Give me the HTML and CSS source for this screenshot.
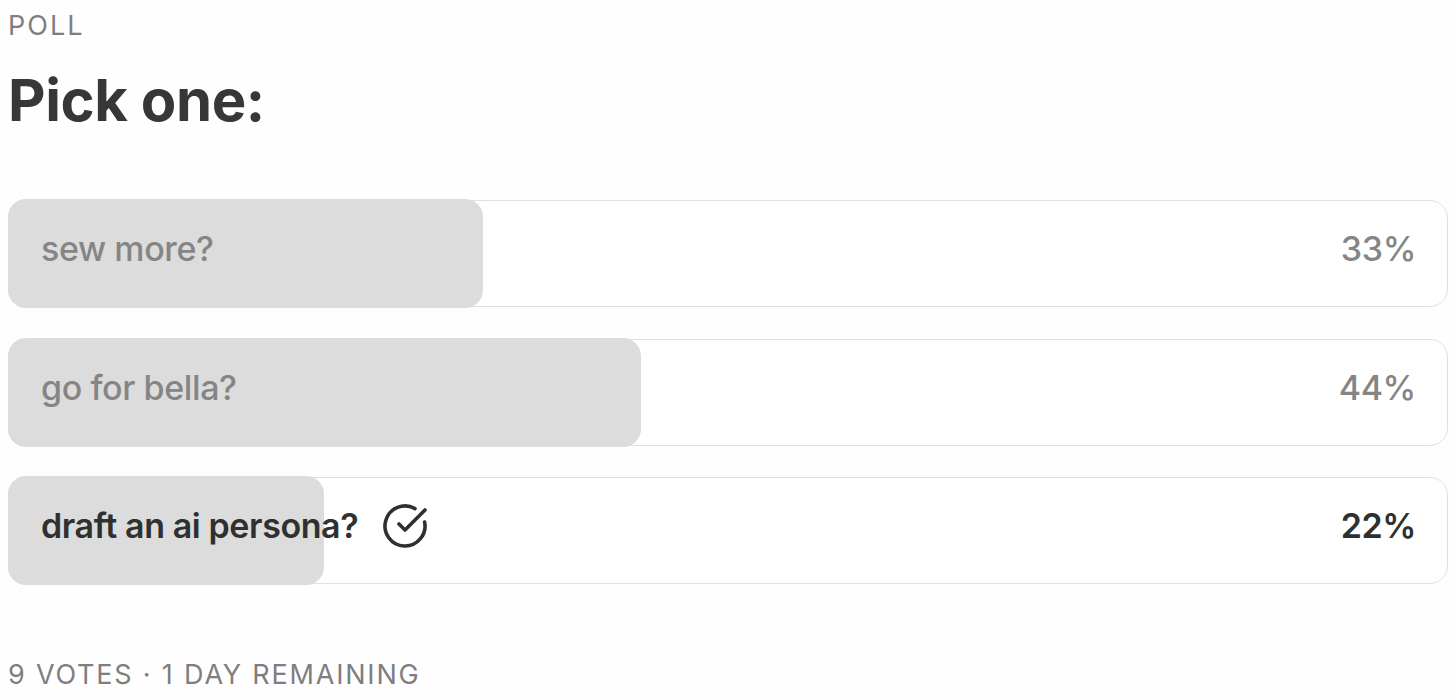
FILE: index.html
```html
<!DOCTYPE html>
<html>
<head>
<meta charset="utf-8">
<link rel="stylesheet" href="styles.css">
</head>
<body>
<div class="poll">
  <div class="label">POLL</div>
  <h1 class="title">Pick one:</h1>
  <div class="options">
    <div class="option">
      <div class="fill" style="width:33%"></div>
      <div class="content">
        <span class="text">sew more?</span>
        <span class="pct">33%</span>
      </div>
    </div>
    <div class="option">
      <div class="fill" style="width:44%"></div>
      <div class="content">
        <span class="text">go for bella?</span>
        <span class="pct">44%</span>
      </div>
    </div>
    <div class="option selected">
      <div class="fill" style="width:22%"></div>
      <div class="content">
        <span class="text">draft an ai persona?</span>
        <svg class="check" viewBox="0 0 24 24" width="48" height="48" fill="none" stroke="currentColor" stroke-width="1.8" stroke-linecap="round" stroke-linejoin="round"><path d="M21.801 10A10 10 0 1 1 17 3.335"/><path d="m9 11 3 3L22 4"/></svg>
        <span class="pct">22%</span>
      </div>
    </div>
  </div>
  <div class="footer">9 VOTES · 1 DAY REMAINING</div>
</div>
</body>
</html>
```

FILE: styles.css
```css
html, body {
  margin: 0;
  background: #fefefe;
}
body {
  padding: 8px;
  font-family: Inter, "Liberation Sans", sans-serif;
}
.poll {
  display: flex;
  flex-direction: column;
}
.label {
  font-size: 27px;
  line-height: 36px;
  color: #7e7e7e;
  letter-spacing: 2px;
}
.title {
  margin: 21px 0 0 0;
  font-size: 58px;
  line-height: 70px;
  font-weight: 700;
  color: #363737;
  letter-spacing: -0.4px;
}
.options {
  margin-top: 65px;
  display: flex;
  flex-direction: column;
  gap: 31.5px;
}
.option {
  position: relative;
  height: 105px;
  border: 1px solid #e0e0e0;
  border-radius: 18px;
  background: #fff;
}
.fill {
  position: absolute;
  left: -1px;
  top: -2px;
  bottom: -2px;
  background: #dcdcdc;
  border-radius: 18px;
}
.content {
  position: relative;
  display: flex;
  align-items: center;
  height: 100%;
  box-sizing: border-box;
  padding: 0 31px 10px 32px;
  font-size: 34px;
  color: #858585;
  font-weight: 500;
  letter-spacing: -0.4px;
}
.text {
  flex: 0 0 auto;
}
.pct {
  margin-left: auto;
}
.selected .content {
  color: #2f3030;
  font-weight: 600;
}
.check {
  margin-left: 23px;
  color: #2f3030;
}
.footer {
  margin-top: 73px;
  font-size: 27px;
  line-height: 36px;
  color: #7e7e7e;
  letter-spacing: 1.8px;
}
```
